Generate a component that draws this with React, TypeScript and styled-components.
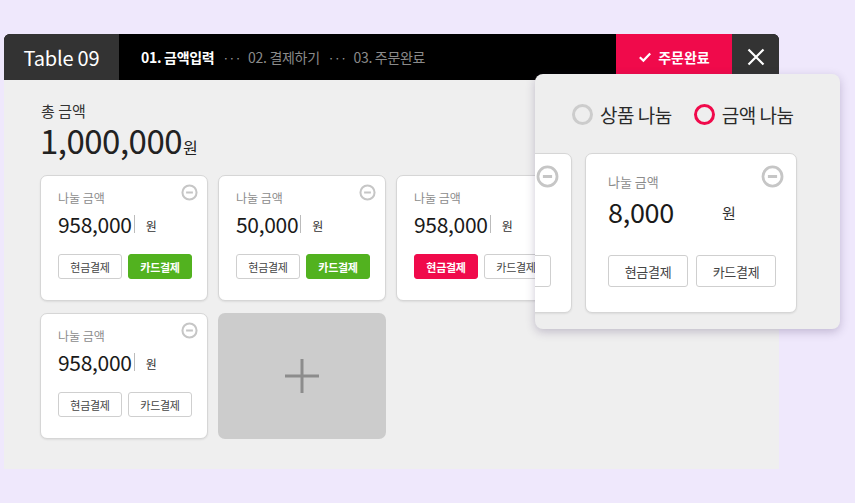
import React from "react";
import styled, { createGlobalStyle, css } from "styled-components";

// ======== ESTILOS ========
const GlobalStyle = createGlobalStyle`
  html, body {
    margin: 0;
    padding: 0;
    background: #efe8fc;
    font-family: "Noto Sans CJK KR", "Noto Sans", sans-serif;
  }
`;

const Page = styled.div`
  position: relative;
  width: 855px;
  height: 503px;
  padding: 34px 0 0 4px;
  box-sizing: border-box;
`;

const Window = styled.div`
  width: 775px;
  height: 435px;
  border-radius: 6px 6px 0 0;
  overflow: hidden;
  background: #efefef;
  display: flex;
  flex-direction: column;
`;

const Header = styled.div`
  height: 46px;
  display: flex;
  background: #000;
  flex-shrink: 0;
`;

const TableTab = styled.div`
  width: 115px;
  background: #333;
  color: #fff;
  font-size: 20px;
  display: flex;
  align-items: center;
  justify-content: center;
  letter-spacing: -0.2px;
`;

const Steps = styled.div`
  flex: 1;
  display: flex;
  align-items: center;
  padding-left: 22px;
  font-size: 14px;
  color: #8a8a8a;
  letter-spacing: -0.3px;
`;

const Step = styled.span<{ $active?: boolean }>`
  color: ${(p) => (p.$active ? "#fff" : "#8a8a8a")};
  font-weight: ${(p) => (p.$active ? 700 : 400)};
`;

const Dots = styled.span`
  color: #9a9a9a;
  font-size: 12px;
  letter-spacing: -0.5px;
  margin: 0 7px 0 8px;
`;

const DoneButton = styled.button`
  width: 116px;
  border: none;
  background: #f00a4b;
  color: #fff;
  font-family: inherit;
  font-size: 14px;
  font-weight: 700;
  display: flex;
  align-items: center;
  justify-content: center;
  gap: 6px;
  padding: 0;
`;

const CloseButton = styled.button`
  width: 47px;
  border: none;
  background: #333;
  display: flex;
  align-items: center;
  justify-content: center;
  padding: 0;
`;

const Body = styled.div`
  flex: 1;
  padding: 21px 0 0 36px;
`;

const TotalLabel = styled.div`
  font-size: 15px;
  color: #333;
  margin-left: 1px;
  line-height: 20px;
`;

const TotalAmount = styled.div`
  display: flex;
  align-items: baseline;
  color: #222;
  font-size: 33px;
  line-height: 38px;
  letter-spacing: -0.5px;
  margin-bottom: 9px;
  span {
    font-size: 16px;
    margin-left: 1px;
  }
`;

const Grid = styled.div`
  display: grid;
  grid-template-columns: repeat(3, 168px);
  gap: 12px 10px;
`;

const Card = styled.div<{ $big?: boolean }>`
  position: relative;
  box-sizing: border-box;
  width: ${(p) => (p.$big ? 212 : 168)}px;
  height: ${(p) => (p.$big ? 160 : 126)}px;
  background: #fff;
  border: 1px solid #d6d6d6;
  border-radius: 7px;
  box-shadow: 0 1px 2px rgba(0, 0, 0, 0.08);
  padding: ${(p) => (p.$big ? "20px 0 0 22px" : "14px 0 0 17px")};
  flex-shrink: 0;
`;

const AddCard = styled.div`
  height: 126px;
  border-radius: 7px;
  background: #cccccc;
  display: flex;
  align-items: center;
  justify-content: center;
`;

const CardLabel = styled.div<{ $big?: boolean }>`
  font-size: ${(p) => (p.$big ? 13 : 12)}px;
  color: #8c8c8c;
  line-height: 16px;
`;

const AmountRow = styled.div<{ $big?: boolean }>`
  display: flex;
  align-items: center;
  height: ${(p) => (p.$big ? 38 : 30)}px;
  margin-top: ${(p) => (p.$big ? 2 : 3)}px;
  color: #1a1a1a;
`;

const AmountValue = styled.span<{ $big?: boolean }>`
  font-size: ${(p) => (p.$big ? 27 : 21)}px;
  letter-spacing: -0.3px;
  ${(p) =>
    p.$big &&
    css`
      width: 114px;
    `}
`;

const Caret = styled.span`
  width: 1px;
  height: 18px;
  background: #bbb;
  margin: 0 11px 0 2px;
`;

const Won = styled.span<{ $big?: boolean }>`
  font-size: ${(p) => (p.$big ? 15 : 12)}px;
  color: #333;
  margin-top: 3px;
`;

const ButtonRow = styled.div<{ $big?: boolean }>`
  display: flex;
  gap: ${(p) => (p.$big ? 8 : 6)}px;
  margin-top: ${(p) => (p.$big ? 25 : 15)}px;
`;

type PayKind = "none" | "green" | "red";

const PayButton = styled.button<{ $kind: PayKind; $big?: boolean }>`
  box-sizing: border-box;
  width: ${(p) => (p.$big ? 80 : 64)}px;
  height: ${(p) => (p.$big ? 32 : 25)}px;
  border-radius: 3px;
  font-family: inherit;
  font-size: ${(p) => (p.$big ? 13 : 11)}px;
  padding: 0;
  letter-spacing: -0.3px;
  ${(p) =>
    p.$kind === "green"
      ? css`
          background: #52b21f;
          border: 1px solid #52b21f;
          color: #fff;
          font-weight: 700;
        `
      : p.$kind === "red"
      ? css`
          background: #f00a4b;
          border: 1px solid #f00a4b;
          color: #fff;
          font-weight: 700;
        `
      : css`
          background: #fff;
          border: 1px solid #cfcfcf;
          color: #444;
        `}
`;

const RemoveIcon = styled.span<{ $big?: boolean }>`
  position: absolute;
  top: ${(p) => (p.$big ? 11 : 8)}px;
  right: ${(p) => (p.$big ? 12 : 9)}px;
  display: flex;
`;

const Popup = styled.div`
  position: absolute;
  left: 535px;
  top: 74px;
  width: 305px;
  height: 255px;
  box-sizing: border-box;
  background: #eeeeee;
  border-radius: 8px;
  box-shadow: 0 3px 10px rgba(60, 40, 90, 0.25);
  overflow: hidden;
  padding-top: 27px;
`;

const RadioRow = styled.div`
  display: flex;
  gap: 22px;
  padding-left: 37px;
  height: 26px;
  align-items: center;
`;

const RadioItem = styled.label`
  display: flex;
  align-items: center;
  gap: 7px;
  font-size: 19px;
  color: #2a2a2a;
  letter-spacing: -0.5px;
`;

const RadioDot = styled.span<{ $on?: boolean }>`
  width: 21px;
  height: 21px;
  box-sizing: border-box;
  border-radius: 50%;
  border: 3px solid ${(p) => (p.$on ? "#f00a4b" : "#cccccc")};
`;

const Slider = styled.div`
  display: flex;
  justify-content: flex-end;
  gap: 13px;
  margin-top: 26px;
  padding-right: 43px;
`;

// ======== ICONES ========
const MinusCircle = ({ size }: { size: number }) => (
  <svg width={size} height={size} viewBox="0 0 20 20">
    <circle cx="10" cy="10" r="8.3" fill="none" stroke="#c6c6c6" strokeWidth="2.4" />
    <line x1="6" y1="10" x2="14" y2="10" stroke="#c6c6c6" strokeWidth="2.4" />
  </svg>
);

const CheckIcon = () => (
  <svg width="14" height="14" viewBox="0 0 14 14">
    <path d="M1.8 7.2 L5.4 10.6 L12.2 3.4" fill="none" stroke="#fff" strokeWidth="2.2" />
  </svg>
);

const CloseIcon = () => (
  <svg width="20" height="20" viewBox="0 0 20 20">
    <path d="M2.5 2.5 L17.5 17.5 M17.5 2.5 L2.5 17.5" stroke="#fff" strokeWidth="2.2" />
  </svg>
);

const PlusIcon = () => (
  <svg width="36" height="36" viewBox="0 0 36 36">
    <path d="M18 1 V35 M1 18 H35" stroke="#8c8c8c" strokeWidth="3" />
  </svg>
);

// ======== COMPONENTE ========
interface Split {
  amount: string;
  cash: PayKind;
  card: PayKind;
}

const splits: Split[] = [
  { amount: "958,000", cash: "none", card: "green" },
  { amount: "50,000", cash: "none", card: "green" },
  { amount: "958,000", cash: "red", card: "none" },
  { amount: "958,000", cash: "none", card: "none" },
];

const SplitCard: React.FC<Split & { big?: boolean; caret?: boolean }> = ({
  amount,
  cash,
  card,
  big,
  caret = true,
}) => (
  <Card $big={big}>
    <RemoveIcon $big={big}>
      <MinusCircle size={big ? 23 : 17} />
    </RemoveIcon>
    <CardLabel $big={big}>나눌 금액</CardLabel>
    <AmountRow $big={big}>
      <AmountValue $big={big}>{amount}</AmountValue>
      {caret && <Caret />}
      <Won $big={big}>원</Won>
    </AmountRow>
    <ButtonRow $big={big}>
      <PayButton $kind={cash} $big={big}>현금결제</PayButton>
      <PayButton $kind={card} $big={big}>카드결제</PayButton>
    </ButtonRow>
  </Card>
);

const App: React.FC = () => {
  return (
    <Page>
      <GlobalStyle />
      <Window>
        <Header>
          <TableTab>Table 09</TableTab>
          <Steps>
            <Step $active>01. 금액입력</Step>
            <Dots>···</Dots>
            <Step>02. 결제하기</Step>
            <Dots>···</Dots>
            <Step>03. 주문완료</Step>
          </Steps>
          <DoneButton>
            <CheckIcon />
            주문완료
          </DoneButton>
          <CloseButton>
            <CloseIcon />
          </CloseButton>
        </Header>
        <Body>
          <TotalLabel>총 금액</TotalLabel>
          <TotalAmount>
            1,000,000<span>원</span>
          </TotalAmount>
          <Grid>
            {splits.map((s, i) => (
              <SplitCard key={i} {...s} />
            ))}
            <AddCard>
              <PlusIcon />
            </AddCard>
          </Grid>
        </Body>
      </Window>

      <Popup>
        <RadioRow>
          <RadioItem>
            <RadioDot />
            상품 나눔
          </RadioItem>
          <RadioItem>
            <RadioDot $on />
            금액 나눔
          </RadioItem>
        </RadioRow>
        <Slider>
          <SplitCard big amount="992,000" cash="none" card="none" caret={false} />
          <SplitCard big amount="8,000" cash="none" card="none" caret={false} />
        </Slider>
      </Popup>
    </Page>
  );
};

export default App;
